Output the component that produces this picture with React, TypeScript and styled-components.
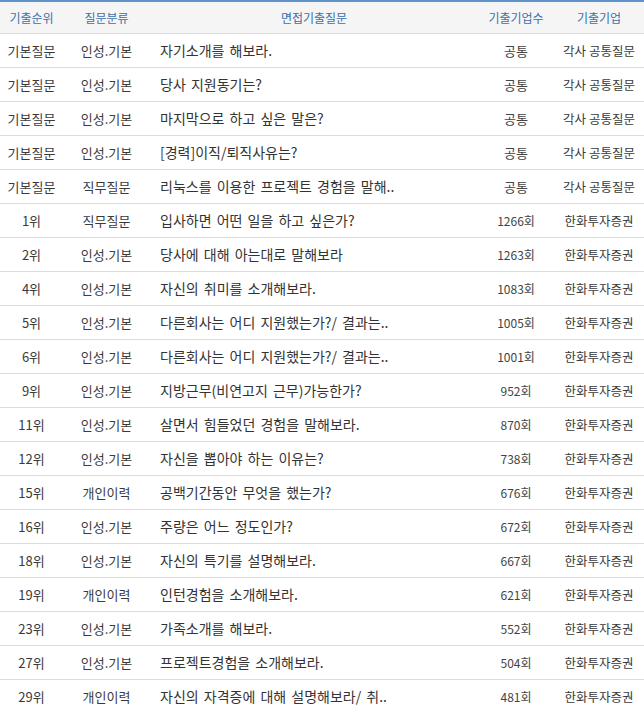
import styled, { createGlobalStyle } from 'styled-components';

type Row = {
  rank: string;
  category: string;
  question: string;
  count: string;
  company: string;
};

const rows: Row[] = [
  { rank: '기본질문', category: '인성.기본', question: '자기소개를 해보라.', count: '공통', company: '각사 공통질문' },
  { rank: '기본질문', category: '인성.기본', question: '당사 지원동기는?', count: '공통', company: '각사 공통질문' },
  { rank: '기본질문', category: '인성.기본', question: '마지막으로 하고 싶은 말은?', count: '공통', company: '각사 공통질문' },
  { rank: '기본질문', category: '인성.기본', question: '[경력]이직/퇴직사유는?', count: '공통', company: '각사 공통질문' },
  { rank: '기본질문', category: '직무질문', question: '리눅스를 이용한 프로젝트 경험을 말해..', count: '공통', company: '각사 공통질문' },
  { rank: '1위', category: '직무질문', question: '입사하면 어떤 일을 하고 싶은가?', count: '1266회', company: '한화투자증권' },
  { rank: '2위', category: '인성.기본', question: '당사에 대해 아는대로 말해보라', count: '1263회', company: '한화투자증권' },
  { rank: '4위', category: '인성.기본', question: '자신의 취미를 소개해보라.', count: '1083회', company: '한화투자증권' },
  { rank: '5위', category: '인성.기본', question: '다른회사는 어디 지원했는가?/ 결과는..', count: '1005회', company: '한화투자증권' },
  { rank: '6위', category: '인성.기본', question: '다른회사는 어디 지원했는가?/ 결과는..', count: '1001회', company: '한화투자증권' },
  { rank: '9위', category: '인성.기본', question: '지방근무(비연고지 근무)가능한가?', count: '952회', company: '한화투자증권' },
  { rank: '11위', category: '인성.기본', question: '살면서 힘들었던 경험을 말해보라.', count: '870회', company: '한화투자증권' },
  { rank: '12위', category: '인성.기본', question: '자신을 뽑아야 하는 이유는?', count: '738회', company: '한화투자증권' },
  { rank: '15위', category: '개인이력', question: '공백기간동안 무엇을 했는가?', count: '676회', company: '한화투자증권' },
  { rank: '16위', category: '인성.기본', question: '주량은 어느 정도인가?', count: '672회', company: '한화투자증권' },
  { rank: '18위', category: '인성.기본', question: '자신의 특기를 설명해보라.', count: '667회', company: '한화투자증권' },
  { rank: '19위', category: '개인이력', question: '인턴경험을 소개해보라.', count: '621회', company: '한화투자증권' },
  { rank: '23위', category: '인성.기본', question: '가족소개를 해보라.', count: '552회', company: '한화투자증권' },
  { rank: '27위', category: '인성.기본', question: '프로젝트경험을 소개해보라.', count: '504회', company: '한화투자증권' },
  { rank: '29위', category: '개인이력', question: '자신의 자격증에 대해 설명해보라/ 취..', count: '481회', company: '한화투자증권' },
];

const GlobalStyle = createGlobalStyle`
  html, body {
    margin: 0;
    padding: 0;
    background: #ffffff;
  }
  body {
    font-family: "Noto Sans CJK KR", "Noto Sans", sans-serif;
    overflow: hidden;
  }
`;

const Table = styled.table`
  width: 644px;
  border-collapse: collapse;
  table-layout: fixed;
  border-top: 2px solid #5f93c9;
  font-size: 13px;
  color: #333333;
`;

const HeadRow = styled.tr`
  height: 32px;
  background: #f5f5f5;
  border-bottom: 1px solid #dddddd;
`;

const HeadCell = styled.th`
  font-weight: normal;
  font-size: 12px;
  color: #3b6fac;
  text-align: center;
  padding: 0;
  white-space: nowrap;
`;

const BodyRow = styled.tr`
  height: 34px;
  border-bottom: 1px solid #dcdcdc;
`;

const Cell = styled.td<{ $size?: number }>`
  text-align: center;
  padding: 0;
  white-space: nowrap;
  overflow: hidden;
  font-size: ${(p) => p.$size ?? 13}px;
  color: #3a3a3a;
`;

const QuestionCell = styled.td`
  text-align: left;
  padding: 0 0 0 10px;
  white-space: nowrap;
  overflow: hidden;
  font-size: 14px;
  word-spacing: 2px;
  color: #333333;
`;

const Count = styled.span<{ $numeric: boolean }>`
  font-size: ${(p) => (p.$numeric ? 12 : 13)}px;
  color: #444444;
`;

export default function App() {
  return (
    <>
      <GlobalStyle />
      <Table>
        <colgroup>
          <col style={{ width: 63 }} />
          <col style={{ width: 87 }} />
          <col style={{ width: 328 }} />
          <col style={{ width: 76 }} />
          <col style={{ width: 90 }} />
        </colgroup>
        <thead>
          <HeadRow>
            <HeadCell>기출순위</HeadCell>
            <HeadCell>질문분류</HeadCell>
            <HeadCell>면접기출질문</HeadCell>
            <HeadCell>기출기업수</HeadCell>
            <HeadCell>기출기업</HeadCell>
          </HeadRow>
        </thead>
        <tbody>
          {rows.map((r, i) => (
            <BodyRow key={i}>
              <Cell>{r.rank}</Cell>
              <Cell>{r.category}</Cell>
              <QuestionCell>{r.question}</QuestionCell>
              <Cell>
                <Count $numeric={/\d/.test(r.count)}>{r.count}</Count>
              </Cell>
              <Cell $size={12.5}>{r.company}</Cell>
            </BodyRow>
          ))}
        </tbody>
      </Table>
    </>
  );
}
